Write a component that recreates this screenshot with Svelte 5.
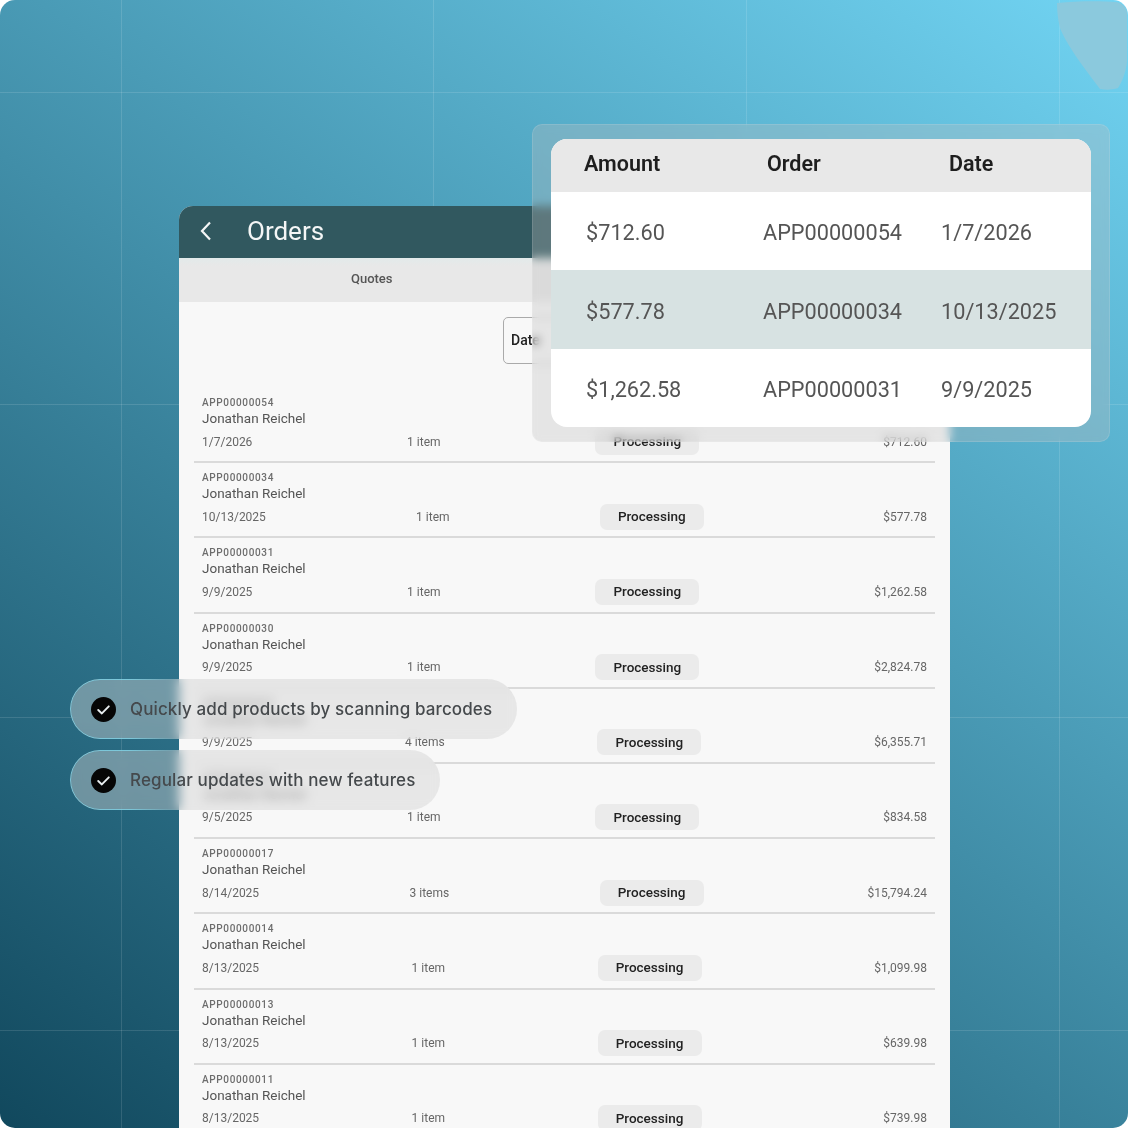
<script>
  const orders = [
    { id: 'APP00000054', date: '1/7/2026', items: '1 item', amount: '$712.60' },
    { id: 'APP00000034', date: '10/13/2025', items: '1 item', amount: '$577.78' },
    { id: 'APP00000031', date: '9/9/2025', items: '1 item', amount: '$1,262.58' },
    { id: 'APP00000030', date: '9/9/2025', items: '1 item', amount: '$2,824.78' },
    { id: 'APP00000029', date: '9/9/2025', items: '4 items', amount: '$6,355.71' },
    { id: 'APP00000018', date: '9/5/2025', items: '1 item', amount: '$834.58' },
    { id: 'APP00000017', date: '8/14/2025', items: '3 items', amount: '$15,794.24' },
    { id: 'APP00000014', date: '8/13/2025', items: '1 item', amount: '$1,099.98' },
    { id: 'APP00000013', date: '8/13/2025', items: '1 item', amount: '$639.98' },
    { id: 'APP00000011', date: '8/13/2025', items: '1 item', amount: '$739.98' }
  ];
  const featured = orders.slice(0, 3);
  const perks = ['Quickly add products by scanning barcodes', 'Regular updates with new features'];
</script>

<div class="stage">
  <svg class="blob" viewBox="0 0 72 92" aria-hidden="true">
    <path d="M1 3 C20 1 45 1 60 2 C67 3 71 8 71 14 L71 62 C70 72 66 82 62 88 C56 90 50 90 44 89 C28 68 10 44 4 28 C2 20 1 12 1 3Z" />
  </svg>

  <section class="panel">
    <header class="bar">
      <svg class="back" viewBox="0 0 14 22" aria-hidden="true"><path d="M11 2.5 3 11l8 8.5" /></svg>
      <h1>Orders</h1>
    </header>
    <nav class="tabs"><span class="tab">Quotes</span><span class="tab"></span></nav>
    <div class="filter-row"><button class="filter">Date</button></div>
    <ul class="list">
      {#each orders as o}
        <li class="row">
          <div class="id">{o.id}</div>
          <div class="name">Jonathan Reichel</div>
          <div class="cells">
            <span class="small">{o.date}</span>
            <span class="small">{o.items}</span>
            <span class="chip">Processing</span>
            <span class="small amount">{o.amount}</span>
          </div>
        </li>
      {/each}
    </ul>
  </section>

  <div class="glass">
    <div class="card">
      <div class="thead"><span class="c1">Amount</span><span class="c2">Order</span><span class="c3">Date</span></div>
      {#each featured as o, i}
        <div class="trow" class:tint={i === 1}>
          <span class="c1">{o.amount}</span><span class="c2">{o.id}</span><span class="c3">{o.date}</span>
        </div>
      {/each}
    </div>
  </div>

  <div class="perks">
    {#each perks as p}
      <div class="perk">
        <svg class="tick" viewBox="0 0 26 26" aria-hidden="true">
          <circle cx="13" cy="13" r="13" />
          <path d="M7.5 13.5l3.8 3.6 7.2-7.4" />
        </svg>
        <span>{p}</span>
      </div>
    {/each}
  </div>
</div>

<style>
  :global(body) { background: #fff; }
  .stage {
    position: relative;
    width: 1128px;
    height: 1128px;
    box-sizing: border-box;
    padding: 206px 178px 0 179px;
    overflow: hidden;
    border-radius: 15px;
    font-family: Roboto, sans-serif;
    background:
      linear-gradient(rgba(255,255,255,.12), rgba(255,255,255,.12)) 121px 0 / 1px 100% no-repeat,
      linear-gradient(rgba(255,255,255,.12), rgba(255,255,255,.12)) 433px 0 / 1px 100% no-repeat,
      linear-gradient(rgba(255,255,255,.12), rgba(255,255,255,.12)) 746px 0 / 1px 100% no-repeat,
      linear-gradient(rgba(255,255,255,.12), rgba(255,255,255,.12)) 1059px 0 / 1px 100% no-repeat,
      linear-gradient(rgba(255,255,255,.12), rgba(255,255,255,.12)) 0 92px / 100% 1px no-repeat,
      linear-gradient(rgba(255,255,255,.12), rgba(255,255,255,.12)) 0 404px / 100% 1px no-repeat,
      linear-gradient(rgba(255,255,255,.12), rgba(255,255,255,.12)) 0 717px / 100% 1px no-repeat,
      linear-gradient(rgba(255,255,255,.12), rgba(255,255,255,.12)) 0 1030px / 100% 1px no-repeat,
      linear-gradient(36deg, #11485d 0%, #71d4f3 100%);
  }
  .blob { position: absolute; left: 1056px; top: 0; width: 72px; height: 92px; }
  .blob path { fill: #8bc9dd; }

  .panel { height: 100%; background: #f8f8f8; border-radius: 14px 14px 0 0; overflow: hidden; filter: blur(.35px); }
  .bar { height: 52px; background: #31585f; display: flex; align-items: center; color: #f4f6f6; }
  .back { width: 14px; height: 22px; margin-left: 20px; margin-top: -2px; fill: none; stroke: #f4f6f6; stroke-width: 2.2; }
  .bar h1 { margin: -2px 0 0 34px; font-size: 26px; font-weight: 400; line-height: 1; }
  .tabs { height: 44px; box-sizing: border-box; padding-bottom: 4px; display: flex; background: linear-gradient(#e2eaea, #e8e8e8 8px); }
  .tab { flex: 1; display: flex; align-items: center; justify-content: center; font-size: 13px; font-weight: 500; color: #555; }
  .filter-row { height: 86px; box-sizing: border-box; padding: 15px 0 0 324px; }
  .filter {
    width: 200px; height: 47px; box-sizing: border-box; padding: 0 0 2px 7px; text-align: left;
    background: transparent; border: 1.5px solid #aaa; border-radius: 5px;
    font: 500 14px Roboto, sans-serif; color: #222;
  }
  .list { list-style: none; margin: 0; padding: 0 15px; }
  .row { height: 75.2px; box-sizing: border-box; padding: 9px 0 0 8px; border-bottom: 2px solid #dadada; }
  .id { font-size: 10px; line-height: 12px; letter-spacing: .65px; font-weight: 500; color: #6d6d6d; }
  .name { font-size: 13.5px; line-height: 18px; color: #555; }
  .cells { display: flex; justify-content: space-between; align-items: center; height: 26px; margin-top: 1.5px; padding-right: 8px; }
  .small { font-size: 12px; color: #666; }
  .amount { width: 73px; text-align: right; }
  .chip {
    width: 104px; height: 26px; box-sizing: border-box; padding-bottom: 1px; display: flex; align-items: center; justify-content: center;
    background: #ebebeb; border-radius: 7px; font-size: 13.5px; font-weight: 500; color: #222;
  }

  .glass {
    position: absolute; left: 532px; top: 124px; width: 578px; height: 318px;
    box-sizing: border-box; padding: 14px 18px;
    background: rgba(190,190,190,.32); border: 1px solid rgba(255,255,255,.12); border-radius: 10px;
    -webkit-backdrop-filter: blur(5px); backdrop-filter: blur(5px);
  }
  .card { height: 288px; background: #fff; border-radius: 16px; overflow: hidden; filter: blur(.45px); }
  .thead { height: 53px; box-sizing: border-box; padding-bottom: 4px; background: #e8e8e8; display: flex; align-items: center; font-size: 21.5px; font-weight: 600; color: #1e1e1e; }
  .trow { height: 78.4px; box-sizing: border-box; padding-top: 3px; display: flex; align-items: center; font-size: 21.7px; color: #555; }
  .tint { background: #d7e2e2; }
  .thead .c1 { margin-left: 33px; width: 183px; }
  .thead .c2 { width: 182px; }
  .trow .c1 { margin-left: 35px; width: 177px; }
  .trow .c2 { width: 178px; }

  .perks { position: absolute; left: 70px; top: 679px; display: flex; flex-direction: column; align-items: flex-start; gap: 11px; }
  .perk {
    position: relative;
    height: 60px; box-sizing: border-box; padding: 0 25px 0 21px; display: flex; align-items: center; gap: 14px;
    border-radius: 30px;
    background: rgba(209,209,209,.43);
    -webkit-backdrop-filter: blur(6px); backdrop-filter: blur(6px);
    font-family: Inter, sans-serif; font-size: 17px; font-weight: 500; color: #45494c; letter-spacing: .12px;
  }
  .perk::before {
    content: '';
    position: absolute;
    inset: 0;
    border: 1px solid rgba(130,220,240,.7);
    border-radius: inherit;
    -webkit-mask-image: linear-gradient(90deg, #000 60px, transparent 110px);
    mask-image: linear-gradient(90deg, #000 60px, transparent 110px);
  }
  .tick { width: 25px; height: 25px; flex: none; }
  .tick circle { fill: #060606; }
  .tick path { fill: none; stroke: #e9eef0; stroke-width: 2; stroke-linecap: round; stroke-linejoin: round; }
</style>
